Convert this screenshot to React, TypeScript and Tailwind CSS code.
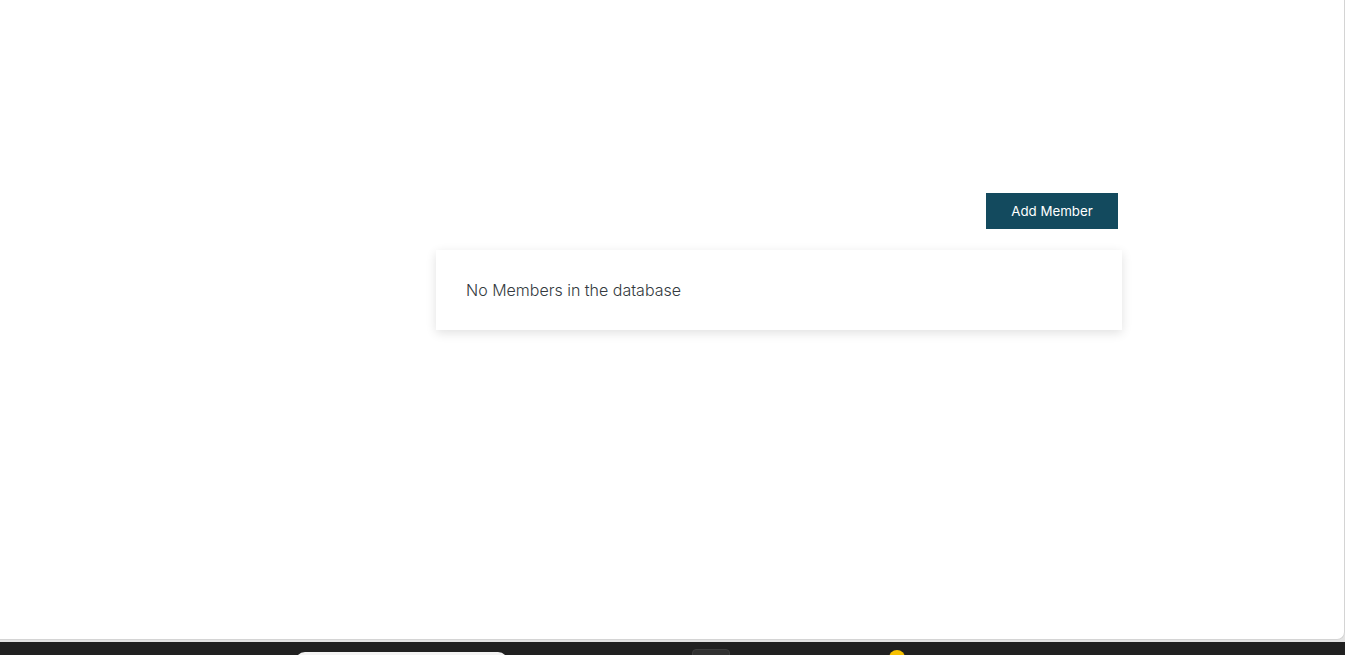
import React from "react";

export default function App() {
  return (
    <div className="h-[655px] w-[1345px] overflow-hidden bg-[#202020] flex flex-col" style={{ fontFamily: "Inter, 'Noto Sans', sans-serif" }}>
      <div className="h-[642px] w-full bg-[#e3e3e3] flex flex-col">
        <div className="h-[640px] w-full bg-white border-r border-b border-[#d4d4d4] rounded-br-[8px] flex flex-col items-start pl-[436px]">
          <div className="w-[686px] mt-[193px] flex flex-col">
            <div className="flex justify-end pr-[4px]">
              <button className="h-[36px] w-[132px] bg-[#134a5e] text-white text-[13.3px] pt-[1px] flex items-center justify-center">
                Add Member
              </button>
            </div>
            <div className="mt-[21px] h-[80px] bg-white shadow-[0_3px_10px_rgba(0,0,0,0.12)] flex items-center pl-[30px]">
              <span className="text-[16px] font-light text-[#343a40]">No Members in the database</span>
            </div>
          </div>
        </div>
      </div>
      <div className="relative flex-1">
        <div className="absolute left-[295px] top-[10px] h-[20px] w-[213px] rounded-full bg-[#f3f3f3]" />
        <div className="absolute left-[692px] top-[7px] h-[20px] w-[38px] rounded-[4px] bg-[#303030] border border-[#3c3c3c]" />
        <div className="absolute left-[889px] top-[8px] h-[16px] w-[16px] rounded-full bg-[#f7c100]" />
      </div>
    </div>
  );
}
